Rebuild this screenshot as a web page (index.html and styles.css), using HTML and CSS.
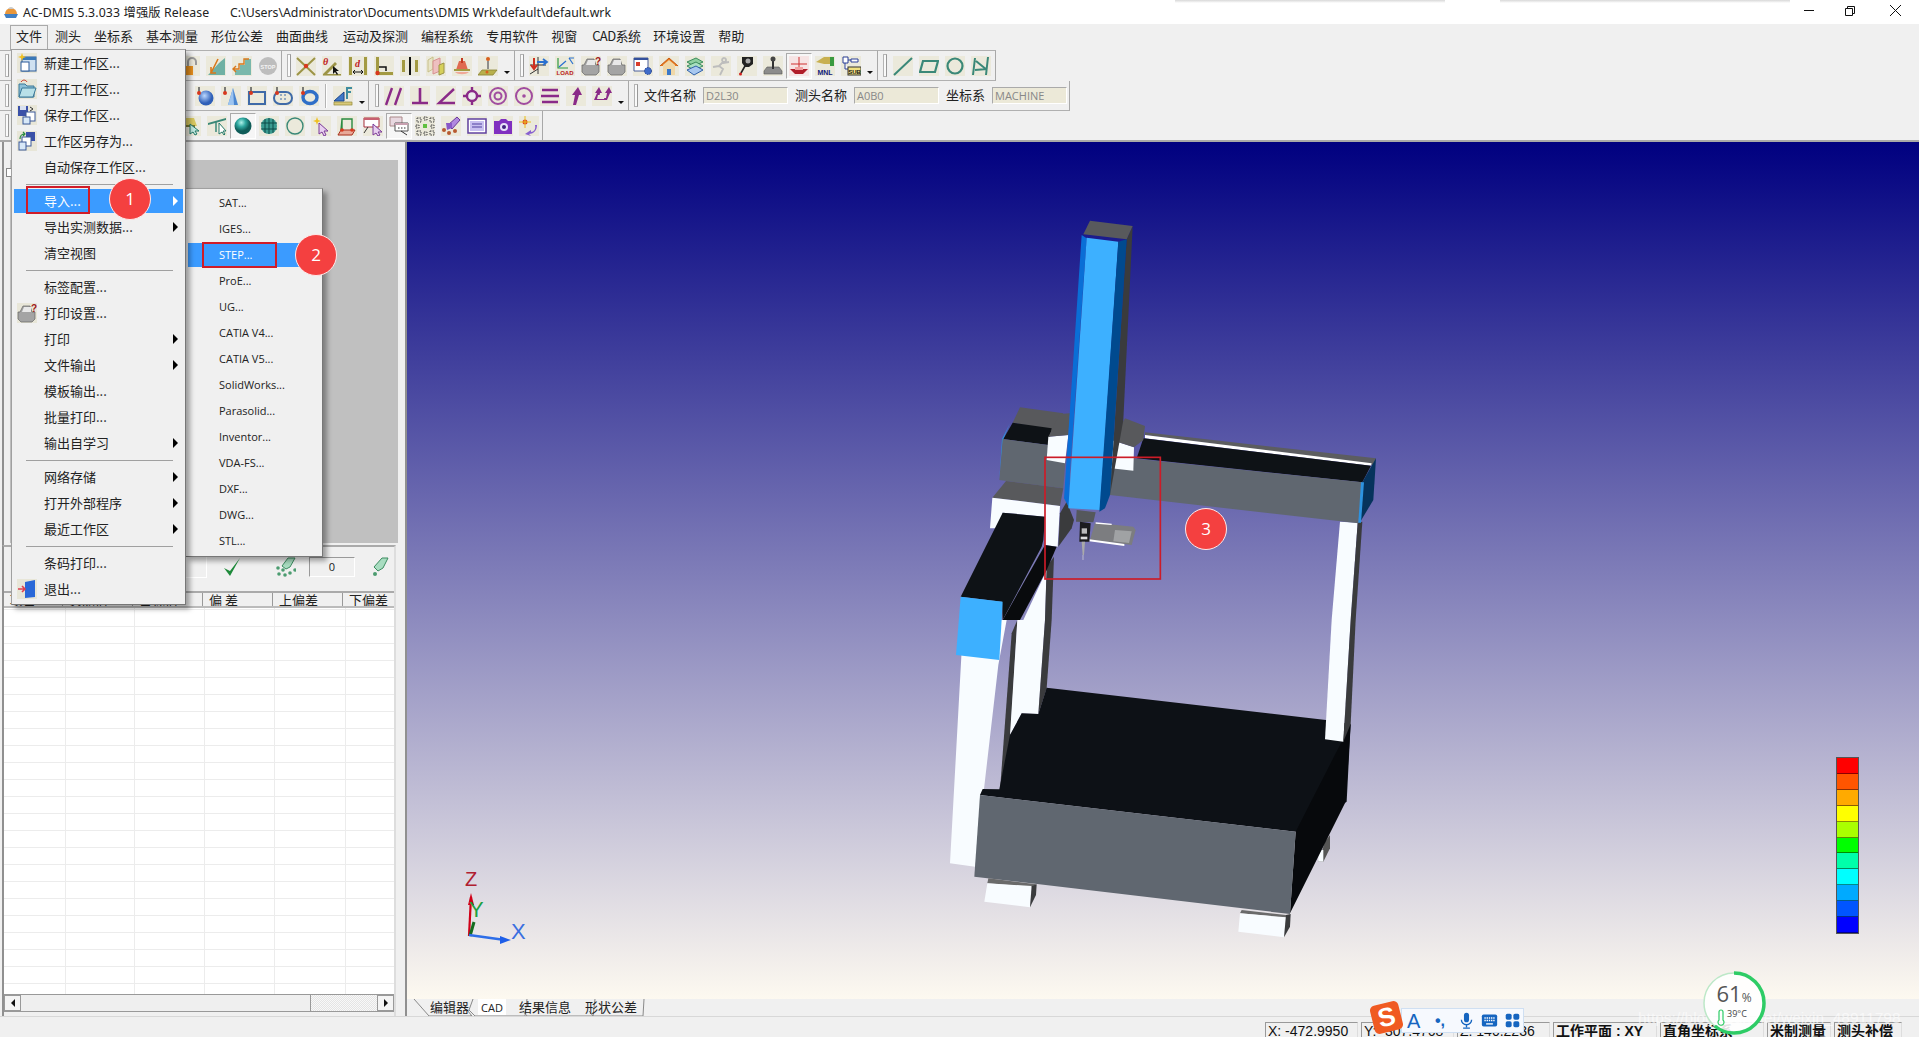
FILE: index.html
```html
<!DOCTYPE html>
<html lang="zh">
<head>
<meta charset="utf-8">
<title>AC-DMIS</title>
<link rel="stylesheet" href="styles.css">
</head>
<body>
<div class="app">
  <header class="title">
    <svg class="logo" viewBox="0 0 16 16"><path d="M2 10a6 6 0 0 1 12 0z" fill="#e8963a"/><path d="M5 5a3.5 4 0 0 1 6 0z" fill="#c9c9c9"/><path d="M1 10h14l-2 4H3z" fill="#3f7fc4"/></svg>
    <span class="t1">AC-DMIS 5.3.033 增强版 Release</span>
    <span class="t2">C:\Users\Administrator\Documents\DMIS Wrk\default\default.wrk</span>
    <div class="winbtns">
      <svg viewBox="0 0 103 24" class="winsvg"><path d="M0 10.5H10" stroke="#111"/><path d="M41.5 8.5h7v7h-7zM43.5 8.5v-2h7v7h-2" fill="none" stroke="#111"/><path d="M86 5l11 11M97 5L86 16" stroke="#111"/></svg>
    </div>
  </header>
  <nav class="menubar">
    <span class="mi active">文件</span><span class="mi">测头</span><span class="mi">坐标系</span><span class="mi">基本测量</span><span class="mi">形位公差</span><span class="mi">曲面曲线</span><span class="mi wide">运动及探测</span><span class="mi">编程系统</span><span class="mi">专用软件</span><span class="mi">视窗</span><span class="mi cad">CAD系统</span><span class="mi">环境设置</span><span class="mi">帮助</span>
  </nav>

  <section class="toolbars">
    <div class="row row1">
      <div class="tbar lead l1"><i class="grip g0"></i>
        <span class="tb"><svg class="ic" viewBox="0 0 20 20"><path d="M8 10V6a4 4 0 0 1 8 0v3" fill="none" stroke="#999" stroke-width="2"/><rect x="2" y="10" width="11" height="9" fill="#e8901c"/></svg></span>
        <span class="tb"><svg class="ic" viewBox="0 0 20 20"><path d="M2 19h17V2C13 6 8 13 2 19z" fill="#6fb0a4"/><path d="M12 3L5 17M5 11v6h5" fill="none" stroke="#d9781c" stroke-width="1.6"/></svg></span>
        <span class="tb"><svg class="ic" viewBox="0 0 20 20"><path d="M3 19v-5h5V9h5V3h6v16z" fill="#7ab8ac"/><path d="M1 13h6V8h5V3h5M4 10l-3 3 3 3" fill="none" stroke="#d9781c" stroke-width="1.4"/></svg></span>
        <span class="tb"><svg class="ic plain" viewBox="0 0 20 20"><circle cx="10" cy="10" r="9" fill="#bdbdbd"/><text x="10" y="12.5" class="stop">STOP</text></svg></span>
      </div>
      <div class="tbar"><i class="grip"></i>
        <span class="tb"><svg class="ic" viewBox="0 0 20 20"><path d="M1 2l18 17M19 2L1 19" stroke="#9c9446" stroke-width="2"/><circle cx="10" cy="10" r="2.2" fill="#d8381e"/></svg></span>
        <span class="tb"><svg class="ic" viewBox="0 0 20 20"><path d="M1 18h18v1.500H1zM1 18L13 6l2 2L5 18z" fill="#9c9446"/><text x="1" y="9" class="it red">θ</text><path d="M11 10v8l2-2 2 3 1-1-2-3h3z" fill="#111"/></svg></span>
        <span class="tb"><svg class="ic" viewBox="0 0 20 20"><path d="M1 1h3v18H1zM16 1h3v18h-3z" fill="#a39a42"/><text x="7" y="11" class="it red">d</text><path d="M5 16h10M5 16l2-2M5 16l2 2M15 16l-2-2M15 16l-2 2" stroke="#111" fill="none"/></svg></span>
        <span class="tb"><svg class="ic" viewBox="0 0 20 20"><path d="M2 1h3v15h14v3H2z" fill="#a39a42"/><path d="M5 11h7v4" fill="none" stroke="#111" stroke-width="1.500"/><circle cx="3.500" cy="17" r="2.200" fill="#d8381e"/></svg></span>
        <span class="tb"><svg class="ic" viewBox="0 0 20 20"><path d="M2 4h3v12H2zM15 4h3v12h-3z" fill="#a39a42"/><path d="M9 1h2v18H9z" fill="#111"/></svg></span>
        <span class="tb"><svg class="ic" viewBox="0 0 20 20"><path d="M2 4l5-3v12l-5 3z" fill="#e8e4c8" stroke="#c8c08a"/><path d="M7 5l7-3v13l-7 3z" fill="#eec0c0" stroke="#d89090"/><path d="M13 9l5-2v10l-5 2z" fill="#d6d05c" stroke="#9c9446"/></svg></span>
        <span class="tb"><svg class="ic" viewBox="0 0 20 20"><path d="M7 5h6l3 9H4z" fill="#e06a50"/><path d="M9 2h2v5H9z" fill="#c23a22"/><path d="M2 13h16v2H2z" fill="#a39a42"/><path d="M3 16c3 3 11 3 14 0z" fill="#f0a898"/></svg></span>
        <span class="tb"><svg class="ic" viewBox="0 0 20 20"><path d="M4 14h15l-4 5H0z" fill="#b8b04c" stroke="#8c8436" stroke-width=".8"/><path d="M10 5v8" stroke="#777" stroke-width="1.600"/><circle cx="10" cy="3" r="2" fill="#d8601e"/><circle cx="9" cy="16" r="1.500" fill="#d8601e"/></svg></span>
        <i class="dd"></i>
      </div>
      <div class="tbar"><i class="grip g3"></i>
        <span class="tb"><svg class="ic" viewBox="0 0 20 20"><path d="M1 9h16M9 1v17M1 18l8-5" fill="none" stroke="#333"/><path d="M5 2v10M2 9l3 4 3-4" fill="none" stroke="#d03020" stroke-width="2"/><path d="M8 6h9M14 3l4 3-4 3" fill="none" stroke="#2a70d0" stroke-width="1.800"/></svg></span>
        <span class="tb"><svg class="ic" viewBox="0 0 20 20"><path d="M3 2v10h10" fill="none" stroke="#2f9a40" stroke-width="1.200"/><path d="M4 11l7-6M14 2h5M14 2l4 6" stroke="#2a70d0" fill="none" stroke-width="1.200"/><text x="10" y="19" class="mini redb">LOAD</text></svg></span>
        <span class="tb"><svg class="ic" viewBox="0 0 20 20"><path d="M3 9l3-6h7l2 6h3v7l-3 3H4l-3-3V9z" fill="#a4a4a4" stroke="#666" stroke-width=".7"/><path d="M5 9h9V4H7z" fill="#e8e8e8"/><text x="14" y="9" class="q">?</text></svg></span>
        <span class="tb"><svg class="ic" viewBox="0 0 20 20"><path d="M3 9l3-6h7l2 6h3v7l-3 3H4l-3-3V9z" fill="#a4a4a4" stroke="#666" stroke-width=".7"/><path d="M5 9h9V4H7z" fill="#e8e8e8"/></svg></span>
        <span class="tb"><svg class="ic" viewBox="0 0 20 20"><path d="M1 2h14v13H1z" fill="#fff" stroke="#4a5e9a"/><path d="M1 2h14v2H1z" fill="#34509c"/><path d="M3 6h4v4H3z" fill="#d83c2c"/><circle cx="15" cy="15" r="3.500" fill="#3f6bc8" stroke="#25408a" stroke-dasharray="1.500 1"/></svg></span>
        <span class="tb"><svg class="ic" viewBox="0 0 20 20"><path d="M1 10l9-8 9 8" fill="#e87a1e" stroke="#c85a10"/><path d="M4 9v10h12V9l-6-5z" fill="#f0d8a8"/><path d="M8 13h4v6H8z" fill="#3a78c8"/></svg></span>
        <span class="tb"><svg class="ic" viewBox="0 0 20 20"><path d="M2 6l9-4 7 4-9 4z" fill="#8fd0a0" stroke="#3c8c5c"/><path d="M2 10l9-4 7 4-9 4z" fill="#a8e0c0" stroke="#3c8c5c"/><path d="M2 14l9-4 7 4-9 5z" fill="#a8c8f0" stroke="#3060a8"/></svg></span>
        <span class="tb"><svg class="ic" viewBox="0 0 20 20"><path d="M13 2a2 2 0 1 0 .1 0M12 6L8 10l4 3-3 6M8 10l-6 1M12 7l6-1" fill="none" stroke="#bdbdbd" stroke-width="1.800"/></svg></span>
        <span class="tb"><svg class="ic" viewBox="0 0 20 20"><path d="M5 1h11v7l-4 3H8L5 7z" fill="#222"/><circle cx="11" cy="5" r="2.500" fill="#aaa"/><path d="M8 10L4 17" stroke="#222" stroke-width="1.600"/><circle cx="3.500" cy="18" r="1.500" fill="#d02020"/></svg></span>
        <span class="tb"><svg class="ic" viewBox="0 0 20 20"><path d="M1 15l3-4h12l3 4v3H1z" fill="#8c8c8c" stroke="#555" stroke-width=".6"/><path d="M10 4v9" stroke="#333" stroke-width="2"/><circle cx="10" cy="3" r="2.500" fill="#444"/></svg></span>
        <span class="tb on"><svg class="ic tint" viewBox="0 0 20 20"><path d="M10 1v12M2 8h16" stroke="#d03030"/><path d="M1 13h18l-5 5H6z" fill="#b01c28"/><path d="M6 11h8v3H6z" fill="#f0a0a0"/></svg></span>
        <span class="tb"><svg class="ic" viewBox="0 0 20 20"><path d="M1 6l8-5h8v7h-8z" fill="#c8b050"/><path d="M15 1h4v9h-4z" fill="#3a9a40"/><text x="10" y="19" class="mini navy">MNL</text></svg></span>
        <span class="tb"><svg class="ic" viewBox="0 0 20 20"><path d="M2 1h5v6H2zM10 3h7v3h-7zM7 4h3M4 7v6h3" fill="#fff" stroke="#2a3f98"/><rect x="7" y="11" width="13" height="8" fill="#f0e080" stroke="#333"/><text x="13.500" y="17.500" class="mini blk">SUB</text></svg></span>
        <i class="dd"></i>
      </div>
      <div class="tbar"><i class="grip g4"></i>
        <span class="tb"><svg class="ic" viewBox="0 0 20 20"><path d="M1 19L19 2" stroke="#3a8878" stroke-width="2"/></svg></span>
        <span class="tb"><svg class="ic" viewBox="0 0 20 20"><path d="M4 5h15l-3 11H1z" fill="none" stroke="#3a8878" stroke-width="2.200"/></svg></span>
        <span class="tb"><svg class="ic" viewBox="0 0 20 20"><circle cx="10" cy="10" r="7.500" fill="none" stroke="#3a8878" stroke-width="2.200"/></svg></span>
        <span class="tb"><svg class="ic" viewBox="0 0 20 20"><path d="M4 2L2 19M17 1l-2 18M5 5l11 9M4 14l12-1" fill="none" stroke="#3a8878" stroke-width="2"/></svg></span>
      </div>
    </div>

    <div class="row row2">
      <div class="tbar lead l2"><i class="grip g0"></i>
        <span class="tb"><svg class="ic" viewBox="0 0 20 20"><defs><radialGradient id="bb" cx=".4" cy=".35"><stop offset="0" stop-color="#bcd8ff"/><stop offset="1" stop-color="#2f5fb8"/></radialGradient></defs><circle cx="11" cy="12" r="7.500" fill="url(#bb)"/><path d="M4 1v5" stroke="#555" stroke-width="1.500"/><circle cx="4" cy="7" r="2" fill="#d8381e"/></svg></span>
        <span class="tb"><svg class="ic" viewBox="0 0 20 20"><path d="M12 2l5 17H7z" fill="#4a86d0"/><path d="M12 2l1 17H7z" fill="#9cc4f0"/><path d="M4 1v5" stroke="#555" stroke-width="1.500"/><circle cx="4" cy="7" r="2" fill="#d8381e"/></svg></span>
        <span class="tb"><svg class="ic" viewBox="0 0 20 20"><rect x="2" y="6" width="16" height="12" fill="none" stroke="#3f6aa8" stroke-width="2"/><path d="M4 1v5" stroke="#555" stroke-width="1.500"/><circle cx="4" cy="7" r="2" fill="#d8381e"/></svg></span>
        <span class="tb"><svg class="ic" viewBox="0 0 20 20"><rect x="1" y="6" width="18" height="12" rx="6" fill="none" stroke="#3f6aa8" stroke-width="2"/><path d="M8 8v8M12 8v8" stroke="#3f6aa8" stroke-dasharray="2"/><path d="M4 1v5" stroke="#555" stroke-width="1.500"/><circle cx="4" cy="7" r="2" fill="#d8381e"/></svg></span>
        <span class="tb"><svg class="ic" viewBox="0 0 20 20"><ellipse cx="11" cy="11.500" rx="7" ry="6" fill="none" stroke="#2f6fc8" stroke-width="3.400"/><path d="M4 1v5" stroke="#555" stroke-width="1.500"/><circle cx="4" cy="7" r="2" fill="#d8381e"/></svg></span>
        <i class="vsep"></i>
        <span class="tb"><svg class="ic" viewBox="0 0 20 20"><path d="M1 15L11 6v9z" fill="#3f78c8" stroke="#1c4488"/><path d="M1 16h18v3H1z" fill="#d8c878" stroke="#8c8436" stroke-width=".6"/><path d="M13 1h6v2h-4v2h3v2h-3v6h-2z" fill="#3f8ca0"/></svg></span>
        <i class="dd"></i>
      </div>
      <div class="tbar"><i class="grip g5"></i>
        <span class="tb"><svg class="ic" viewBox="0 0 20 20"><path d="M8 2L2 19M17 2l-6 17" stroke="#8a2a88" stroke-width="2.400"/></svg></span>
        <span class="tb"><svg class="ic" viewBox="0 0 20 20"><path d="M10 2v14M2 17h16" stroke="#8a2a88" stroke-width="2.600"/></svg></span>
        <span class="tb"><svg class="ic" viewBox="0 0 20 20"><path d="M18 3L3 17h16" fill="none" stroke="#8a2a88" stroke-width="2.400"/></svg></span>
        <span class="tb"><svg class="ic" viewBox="0 0 20 20"><path d="M10 1v18M1 10h18" stroke="#8a2a88" stroke-width="2.400"/><circle cx="10" cy="10" r="5" fill="#eee" stroke="#8a2a88" stroke-width="2.400"/></svg></span>
        <span class="tb"><svg class="ic" viewBox="0 0 20 20"><circle cx="10" cy="10" r="8" fill="none" stroke="#a04ca0" stroke-width="2"/><circle cx="10" cy="10" r="3.500" fill="none" stroke="#a04ca0" stroke-width="2"/></svg></span>
        <span class="tb"><svg class="ic" viewBox="0 0 20 20"><circle cx="10" cy="10" r="8" fill="none" stroke="#a04ca0" stroke-width="2"/><circle cx="10" cy="10" r="1.800" fill="#a04ca0"/></svg></span>
        <span class="tb"><svg class="ic" viewBox="0 0 20 20"><path d="M2 4h16M1 10h18M2 16h16" stroke="#8a2a88" stroke-width="2.600"/></svg></span>
        <span class="tb"><svg class="ic" viewBox="0 0 20 20"><path d="M12 1l4 8h-3l-3 10H7l2-10H6z" fill="#8a2a88"/></svg></span>
        <span class="tb"><svg class="ic" viewBox="0 0 20 20"><path d="M7 1l3 6H8l-1 5h7l1-5h-2l4-6 3 6h-2l-3 7H2L5 7H3z" fill="#8a2a88"/><path d="M6 9h7l-1 4H5z" fill="#ebe9db"/></svg></span>
        <i class="dd"></i>
      </div>
      <div class="tbar fields"><i class="grip g6"></i>
        <span class="lbl">文件名称</span><span class="field">D2L30</span>
        <span class="lbl">测头名称</span><span class="field">A0B0</span>
        <span class="lbl">坐标系</span><span class="field">MACHINE</span>
      </div>
    </div>

    <div class="row row3">
      <div class="tbar lead l3 last"><i class="grip g0"></i>
        <span class="tb"><svg class="ic" viewBox="0 0 20 20"><path d="M1 2h12l3 8H1z" fill="#d8c860"/><path d="M1 10h13" stroke="#7a7a30" stroke-width="2"/><path d="M9 8v10l3-2 2 3 2-1-2-3h4z" fill="#bfe8e0" stroke="#247868"/></svg></span>
        <span class="tb"><svg class="ic" viewBox="0 0 20 20"><path d="M1 7L19 2v2L1 9z" fill="#3a8878"/><path d="M9 6v10" stroke="#3a8878" stroke-width="1.500"/><path d="M12 7v11l3-2 2 3 1-1-2-3h3z" fill="#fff" stroke="#247868"/></svg></span>
        <span class="tb on"><svg class="ic plain" viewBox="0 0 20 20"><defs><radialGradient id="tb" cx=".4" cy=".3"><stop offset="0" stop-color="#b0f0e8"/><stop offset=".5" stop-color="#2fa8a0"/><stop offset="1" stop-color="#0f5c58"/></radialGradient></defs><circle cx="10" cy="10" r="8.500" fill="url(#tb)"/></svg></span>
        <span class="tb"><svg class="ic" viewBox="0 0 20 20"><circle cx="10" cy="10" r="8" fill="#3a9a90"/><path d="M2 7h16M2 13h16M10 2v16M6 3v14M14 3v14" stroke="#0c4a48"/></svg></span>
        <span class="tb"><svg class="ic" viewBox="0 0 20 20"><circle cx="10" cy="10" r="8" fill="none" stroke="#3a8878" stroke-width="1.400"/></svg></span>
        <span class="tb"><svg class="ic" viewBox="0 0 20 20"><path d="M6 1l1 3 3 1-3 1-1 3-1-3-3-1 3-1z" fill="#f0c020"/><path d="M8 7v11l3-2 2 4 2-1-2-4h4z" fill="#e8d0f0" stroke="#7a3a98"/></svg></span>
        <span class="tb"><svg class="ic" viewBox="0 0 20 20"><path d="M4 14h14l-3 5H1z" fill="#e8a898" stroke="#a83020"/><path d="M5 14V3h10v11M5 3l-1 11" fill="none" stroke="#2a8a40" stroke-width="1.400"/><circle cx="5" cy="14" r="1.800" fill="#d8381e"/><circle cx="15" cy="14" r="1.800" fill="#d8381e"/></svg></span>
        <span class="tb"><svg class="ic" viewBox="0 0 20 20"><path d="M1 2h15v9H1z" fill="#fff" stroke="#a83040"/><path d="M1 2h15v2H1z" fill="#c86070"/><path d="M5 11L1 17" stroke="#333"/><path d="M10 8v11l3-2 2 3 2-1-2-3h4z" fill="#e8d0f0" stroke="#7a3a98"/></svg></span>
        <span class="tb on"><svg class="ic plain" viewBox="0 0 20 20"><path d="M1 1h12v9H1z" fill="#e8d8e0" stroke="#a88"/><path d="M6 7h13v8H6z" fill="#fff" stroke="#555"/><path d="M6 7h13v2H6z" fill="#c8a0b0"/><path d="M9 12h8" stroke="#333" stroke-dasharray="1.500"/><path d="M12 15l6 4" stroke="#333"/></svg></span>
        <span class="tb"><svg class="ic" viewBox="0 0 20 20"><path d="M2 2h4v4H2zM9 1h3v3H9zM15 2h4v4h-4zM1 9h3v3H1zM16 9h3v3h-3zM2 15h4v4H2zM9 16h3v3H9zM15 15h4v4h-4z" fill="none" stroke="#444" stroke-dasharray="1.500 1"/><rect x="8" y="8" width="4" height="4" fill="#60c040"/></svg></span>
        <span class="tb"><svg class="ic" viewBox="0 0 20 20"><path d="M7 9l9-8 3 3-8 9z" fill="#b088e0" stroke="#6a3a98"/><path d="M5 7h6v5l-5 2z" fill="#8858c8"/><circle cx="3" cy="14" r="2" fill="#b85a30"/><circle cx="8" cy="17" r="2" fill="#b85a30"/><circle cx="14" cy="15" r="2" fill="#b85a30"/></svg></span>
        <span class="tb"><svg class="ic" viewBox="0 0 20 20"><rect x="1" y="3" width="18" height="14" fill="#fff" stroke="#6040a0" stroke-width="1.500"/><rect x="3" y="5" width="14" height="10" fill="#c8c0f0"/><path d="M5 8h10M5 11h10" stroke="#5040a0"/></svg></span>
        <span class="tb"><svg class="ic" viewBox="0 0 20 20"><path d="M1 5h5l2-2h5l2 2h4v13H1z" fill="#8030c0"/><circle cx="11" cy="11" r="4" fill="#e8e0f8"/><circle cx="11" cy="11" r="2" fill="#402080"/></svg></span>
        <span class="tb"><svg class="ic" viewBox="0 0 20 20"><circle cx="6" cy="6" r="2.500" fill="#e04020"/><path d="M6 0v12M0 6h12" stroke="#e8c020"/><path d="M18 9c0 6-4 9-8 9l2 2-6-2 6-4v2c3 0 5-3 4-7z" fill="#8860d0"/></svg></span>
      </div>
    </div>
  </section>

  <main class="main">
    <aside class="left">
      <div class="tree"><i class="expander"></i><div class="treebody"></div></div>
      <div class="results">
        <div class="rtools">
          <span class="rinput"></span>
          <svg class="rcheck" viewBox="0 0 20 20"><path d="M2 11l6 8L18 1 8 14z" fill="#1e8a3a"/></svg>
          <svg class="rerase" viewBox="0 0 20 20"><path d="M6 9l6-8h7l-5 9-4 2z" fill="#a8dcc0" stroke="#3c8c60"/><circle cx="2" cy="11" r="1.800" fill="#4c9c70"/><circle cx="7" cy="13" r="1.800" fill="#4c9c70"/><circle cx="3" cy="17" r="1.800" fill="#4c9c70"/><circle cx="9" cy="18" r="1.800" fill="#4c9c70"/><circle cx="14" cy="16" r="1.800" fill="#4c9c70"/><circle cx="19" cy="13" r="1.800" fill="#4c9c70"/></svg>
          <span class="rcount">0</span>
          <svg class="rerase2" viewBox="0 0 20 20"><path d="M4 10l8-9h6l-5 10-5 3z" fill="#a8dcc0" stroke="#3c8c60"/><circle cx="5" cy="17" r="2" fill="#4c9c70"/></svg>
        </div>
        <div class="thead"><span class="th c1">项目</span><span class="th c2">实测值</span><span class="th c3">目标值</span><span class="th c4">偏 差</span><span class="th c4">上偏差</span><span class="th c5">下偏差</span></div>
        <div class="grid"></div>
        <div class="hscroll"><span class="sb"><i class="al"></i></span><span class="thumb"></span><span class="track"></span><span class="sb"><i class="ar"></i></span></div>
      </div>
    </aside>
    <section class="viewarea">
      <div class="view">
        <svg class="scene" viewBox="405 142 1514 857">
          <g transform="translate(930 620) scale(.33333)">
            <path d="M100 0h130l-25 135-70 605-75-10z" fill="#f8fcff"/>
            <path d="M245 40l17-40-28 470-24 40z" fill="#3a3b3d"/>
            <path d="M262 0h83l-20 282-50-2-35 65z" fill="#f8fcff"/>
            <path d="M345 0h20l-15 205-25 77z" fill="#3a3b3d"/>
            <path d="M1200 645v40l-20 40h-15l20-60z" fill="#555"/>
            <path d="M1165 690l15 0v35h-15z" fill="#f8fcff"/>
            <path d="M350 203L1188 300l74 12-12 233-153 90L150 525l8-18 50 1 32-163 35-65 50 2z" fill="#0d1116"/>
            <path d="M1097 635L1235 365l27-53-15 233-167 335z" fill="#07090c"/>
            <path d="M1205 0h57l-22 365-55-7z" fill="#f8fcff"/>
            <path d="M1262 0h15l-15 312-22 53z" fill="#3a3b3d"/>
            <path d="M150 525l947 110-17 247L133 770z" fill="#606770"/>
            <path d="M175 775l145 18-15 7-133-10z" fill="#6a6a6a"/>
            <path d="M172 790l133 8-5 64-137-17z" fill="#f8fcff"/>
            <path d="M305 798l15-5-2 32-18 37z" fill="#3a3b3d"/>
            <path d="M935 870l133 15v8l-138-13z" fill="#6a6a6a"/>
            <path d="M930 880l138 12-6 60-137-17z" fill="#f8fcff"/>
            <path d="M1068 885l14-3-2 38-18 32z" fill="#3a3b3d"/>
          </g>
          <g transform="translate(930 200) scale(.33333)">
            <path d="M1230 965l53 3-21 292h-57z" fill="#f8fcff"/>
            <path d="M1283 968l14-3-20 295h-15z" fill="#3a3b3d"/>
            <path d="M350 1110l-70 150h65z" fill="#f8fcff"/>
            <path d="M350 1100l22-30-7 190h-20z" fill="#3a3b3d"/>
            <path d="M645 697l693 78-8 20-685-90z" fill="#5c5d60"/>
            <path d="M645 705l680 85-2 7-678-82z" fill="#fff"/>
            <path d="M640 715l683 82-26 50-677-72z" fill="#0e1216"/>
            <path d="M540 768l757 79-12 123-745-85z" fill="#606770"/>
            <path d="M1297 847l41-72-8 125-42 70z" fill="#06335c"/>
            <path d="M1293 847h9l-9 121h-8z" fill="#2d93e0"/>
            <path d="M270 622l130 18-45 70v-20l-107-22z" fill="#58595c"/>
            <path d="M248 668l117 17-10 50-135-18z" fill="#0e1216"/>
            <path d="M240 670l-20 47-12 123 8-123z" fill="#2d93e0"/>
            <path d="M218 717l137 18 55 0-10 130-192-25z" fill="#606770"/>
            <path d="M355 710l60-5-10 85-55-10z" fill="#f8fcff"/>
            <path d="M390 642l30-2-5 65-60 5z" fill="#58595c"/>
            <path d="M545 720l67 22-2 70-67-7z" fill="#f8fcff"/>
            <path d="M585 655l60 23-5 42-28 22-67-22z" fill="#58595c"/>
            <path d="M228 843l172 22-10 53-203-25z" fill="#58595c"/>
            <path d="M187 893l203 25-7 122-38-5v-85l-127-12-3 47h-35z" fill="#f8fcff"/>
            <path d="M410 905l22 55-7 25-40 55 5-100z" fill="#3a3b3d"/>
            <path d="M218 938l127 12-5 70-5 20-117 220-2-55-124-15z" fill="#0e1216"/>
            <path d="M345 1035l35 5-30 70-80 150h-52z" fill="#090b0d"/>
            <path d="M92 1190l126 15-10 175-130-15z" fill="#3db0ff"/>
            <path d="M590 118l18-40-28 582-40 225z" fill="#3a3b3d"/>
            <path d="M480 62l128 16-18 40-130-15z" fill="#58595c"/>
            <path d="M455 105l15 10-50 700-2 110-16-30z" fill="#0a6ed6"/>
            <path d="M470 113l95 12-55 805-95-5z" fill="#3db0ff"/>
            <path d="M565 125l25-7-50 767-15 40-17 10z" fill="#004a8f"/>
            <path d="M440 930l57 7-7 30-52-2z" fill="#55585c"/>
            <path d="M495 968l115 12 7 10-12 45-125-15z" fill="#7c7d80"/>
            <path d="M497 967l48 4v4l-48-4zM478 1018l105 14v6l-105-14z" fill="#fff"/>
            <path d="M555 990l50 4-8 35-47-5z" fill="#a0a2a4"/>
            <path d="M450 965l32 5-4 55h-30z" fill="#1c1c1e"/>
            <rect x="455" y="985" width="16" height="16" fill="#bbb"/>
            <rect x="452" y="1010" width="20" height="8" fill="#ddd"/>
            <path d="M455 1025h10l-3 40h-4z" fill="#aaa"/>
            <path d="M459 1065v15" stroke="#ddd" stroke-width="2"/>
            <rect x="345" y="772" width="346" height="365" fill="none" stroke="#cc1c28" stroke-width="5"/>
          </g>
          <path d="M469 936l2-39" stroke="#d00018" stroke-width="2.200"/>
          <path d="M471 893l-3 12h6z" fill="#d00018"/>
          <path d="M470 936l4-14" stroke="#146c20" stroke-width="3"/>
          <path d="M469 935l36 5" stroke="#2e6ee8" stroke-width="2.400"/>
          <path d="M511 940l-11-4v8z" fill="#1e5ee8"/>
          <text x="465" y="886" class="axis az">Z</text>
          <text x="469" y="917" class="axis ay">Y</text>
          <text x="511" y="939" class="axis ax">X</text>
        </svg>
        <div class="legend"><i class="s1"></i><i class="s2"></i><i class="s3"></i><i class="s4"></i><i class="s5"></i><i class="s6"></i><i class="s7"></i><i class="s8"></i><i class="s9"></i><i class="s10"></i><i class="s11"></i></div>
      </div>
      <div class="tabs">
        <svg class="tabline" viewBox="0 0 240 17"><path d="M5 0l15 17h43l-5-6M63 17h-2M60 11l6 6h50l2-17M118 17l-4-5M118 17h66l2-17M184 17l-4-5M184 17h50l1-17" fill="none" stroke="#888"/><path d="M60 11l4-11" fill="none" stroke="#888"/></svg>
        <span class="tab t-a">编辑器</span><span class="tab t-b">CAD</span><span class="tab t-c">结果信息</span><span class="tab t-d">形状公差</span>
      </div>
    </section>
  </main>

  <footer class="status">
    <span class="cell w93">X: -472.9950</span><span class="cell w93">Y: -307.4768</span><span class="cell w93">Z: 140.2236</span><span class="cell w104 bold">工作平面 : XY</span><span class="cell w104 bold">直角坐标系</span><span class="cell w64 bold">米制测量</span><span class="cell w68 bold">测头补偿</span>
  </footer>

  <!-- overlays -->
  <div class="topshade a"></div><div class="topshade b"></div>

  <div class="popup filemenu">
    <div class="it2"><svg class="mic" viewBox="0 0 20 20"><rect x="5" y="4" width="14" height="14" fill="#cfe0f0" stroke="#2a5a9a"/><path d="M5 4h14v3H5z" fill="#3a78b8"/><rect x="4" y="9" width="8" height="9" fill="#fff" stroke="#2a5a9a"/><path d="M5 0l1 3 3 1-3 1-1 3-1-3-3-1 3-1z" fill="#f0c020"/></svg>新建工作区...</div>
    <div class="it2"><svg class="mic" viewBox="0 0 20 20"><path d="M2 5h6l2 2h7v11H2z" fill="#8ec0d8" stroke="#3a7898"/><path d="M5 9h14l-3 9H2z" fill="#b8e0e8" stroke="#3a7898"/><path d="M4 3c2-3 5-2 6 0" fill="none" stroke="#c83020"/></svg>打开工作区...</div>
    <div class="it2"><svg class="mic" viewBox="0 0 20 20"><rect x="1" y="1" width="10" height="10" fill="#3a50a8"/><rect x="3" y="1" width="6" height="4" fill="#d8e0f0"/><rect x="9" y="7" width="9" height="9" fill="#fff" stroke="#3a5898"/><rect x="6" y="12" width="7" height="7" fill="#d8e8f8" stroke="#3a5898"/><path d="M13 2l3 2-3 2" fill="none" stroke="#333"/></svg>保存工作区...</div>
    <div class="it2"><svg class="mic" viewBox="0 0 20 20"><rect x="9" y="1" width="9" height="9" fill="#3a50a8"/><rect x="5" y="6" width="9" height="9" fill="#fff" stroke="#3a5898"/><rect x="2" y="11" width="7" height="8" fill="#d8e8f8" stroke="#3a5898"/><path d="M3 8c0-3 2-5 5-5M6 1l2 2-2 2" fill="none" stroke="#2a8a40" stroke-width="1.200"/></svg>工作区另存为...</div>
    <div class="it2 noic">自动保存工作区...</div>
    <hr class="msep">
    <div class="it2 sel arrow">导入...</div>
    <div class="it2 noic arrow">导出实测数据...</div>
    <div class="it2 noic">清空视图</div>
    <hr class="msep">
    <div class="it2 noic">标签配置...</div>
    <div class="it2"><svg class="mic" viewBox="0 0 20 20"><path d="M3 9l3-6h7l2 6h3v7l-3 3H4l-3-3V9z" fill="#a4a4a4" stroke="#666" stroke-width=".7"/><path d="M5 9h9V4H7z" fill="#e8e8e8"/><text x="14" y="9" class="q">?</text></svg>打印设置...</div>
    <div class="it2 noic arrow">打印</div>
    <div class="it2 noic arrow">文件输出</div>
    <div class="it2 noic">模板输出...</div>
    <div class="it2 noic">批量打印...</div>
    <div class="it2 noic arrow">输出自学习</div>
    <hr class="msep">
    <div class="it2 noic arrow">网络存储</div>
    <div class="it2 noic arrow">打开外部程序</div>
    <div class="it2 noic arrow">最近工作区</div>
    <hr class="msep">
    <div class="it2 noic">条码打印...</div>
    <div class="it2"><svg class="mic" viewBox="0 0 20 20"><path d="M8 3l10-2v17l-10 1z" fill="#2a68d8"/><path d="M1 10h6M5 7l3 3-3 3" fill="none" stroke="#e04050" stroke-width="1.600"/></svg>退出...</div>
  </div>

  <div class="popup submenu">
    <div class="sub">SAT...</div><div class="sub">IGES...</div><div class="sub sel">STEP...</div><div class="sub">ProE...</div><div class="sub">UG...</div><div class="sub">CATIA V4...</div><div class="sub">CATIA V5...</div><div class="sub">SolidWorks...</div><div class="sub">Parasolid...</div><div class="sub">Inventor...</div><div class="sub">VDA-FS...</div><div class="sub">DXF...</div><div class="sub">DWG...</div><div class="sub">STL...</div>
  </div>

  <div class="redbox r1"></div><div class="redbox r2"></div>
  <div class="callout n1">1</div><div class="callout n2">2</div><div class="callout n3">3</div>

  <div class="watermark">https://blog.csdn.net/weixin_48911798</div>

  <div class="ime">
    <span class="ime-s">S</span>
    <span class="ime-a">A</span>
    <span class="ime-p">•,</span>
    <svg class="ime-i" viewBox="0 0 20 20"><rect x="7" y="1" width="6" height="11" rx="3" fill="#1565c0"/><path d="M4 9a6 6 0 0 0 12 0M10 15v3M6 19h8" fill="none" stroke="#1565c0" stroke-width="1.600"/></svg>
    <svg class="ime-i" viewBox="0 0 20 20"><rect x="1" y="3" width="18" height="14" rx="2" fill="#1565c0"/><path d="M4 7h12M4 10h12" stroke="#fff" stroke-width="1.600" stroke-dasharray="1.600 1"/><path d="M6 14h8" stroke="#fff" stroke-width="1.600"/></svg>
    <svg class="ime-i" viewBox="0 0 20 20"><rect x="2" y="2" width="7" height="7" rx="2" fill="#1565c0"/><rect x="11" y="2" width="7" height="7" rx="2" fill="#1565c0"/><rect x="2" y="11" width="7" height="7" rx="2" fill="#1565c0"/><rect x="11" y="11" width="7" height="7" rx="2" fill="#1565c0"/></svg>
  </div>

  <div class="gauge">
    <svg class="gring" viewBox="0 0 68 68"><circle cx="34" cy="34" r="30" fill="#fff" fill-opacity=".88" stroke="#bde8c8" stroke-width="1.500"/><circle cx="34" cy="34" r="30" fill="none" stroke="#2ecc66" stroke-width="3.500" stroke-dasharray="115 188" transform="rotate(-90 34 34)"/><path d="M19 43v8a3 3 0 1 0 4 0v-8a2 2 0 0 0-4 0z" fill="none" stroke="#2ecc66" stroke-width="1.200"/></svg>
    <div class="gtext"><span class="gnum">61</span><span class="gpct">%</span></div>
    <div class="gtemp">39°C</div>
  </div>
</div>
</body>
</html>
```
FILE: styles.css
```css
* { box-sizing: border-box; }
html, body { margin: 0; padding: 0; }
body { font-family: "Noto Sans CJK SC", "Noto Sans", sans-serif; color: #222; background: #f0f0f0; }
.app { position: relative; width: 1919px; height: 1037px; overflow: hidden; display: flex; flex-direction: column; background: #f0f0f0; }

/* title */
.title { height: 24px; background: #fff; display: flex; align-items: center; font: 12.300px "Noto Sans", "Noto Sans CJK SC", sans-serif; padding-left: 3px; color: #222; flex: none; }
.logo { width: 16px; height: 16px; margin-right: 4px; }
.t1 { width: 207px; white-space: nowrap; letter-spacing: .12px; }
.t2 { white-space: nowrap; }
.winbtns { margin-left: auto; margin-right: 12px; height: 24px; }
.winsvg { width: 103px; height: 24px; display: block; overflow: visible; }
.topshade { position: absolute; top: 0; height: 3px; background: linear-gradient(#d8d8d8, #fff); }
.topshade.a { left: 1175px; width: 270px; }
.topshade.b { left: 1500px; width: 290px; }

/* menubar */
.menubar { height: 26px; display: flex; align-items: flex-start; gap: 13px; padding-left: 16px; font-size: 13px; flex: none; color: #222; }
.mi { position: relative; white-space: nowrap; line-height: 24px; height: 26px; }
.mi.wide { margin-left: 2px; }
.mi.cad { margin-left: 2px; letter-spacing: -.6px; }
.mi.active::before { content: ""; position: absolute; left: -6px; right: -6px; top: 1px; bottom: 0; border: 1px solid #aaa; border-bottom: 0; background: transparent; }

/* toolbars */
.toolbars { flex: none; height: 92px; }
.row { display: flex; align-items: stretch; }
.row1 { height: 31px; }
.row2 { height: 30px; }
.row3 { height: 31px; border-bottom: 2px solid #a8a8a8; }
.tbar { display: flex; align-items: center; border-bottom: 1px solid #b0b0b0; border-right: 1px solid #a8a8a8; padding-right: 1px; }
.row1 .tbar { border-top: 1px solid #b0b0b0; }
.row3 .tbar { border-bottom: 0; }
.lead { position: relative; padding-right: 0; }
.l1 { padding-left: 177px; width: 282px; }
.l2 { padding-left: 192px; width: 369px; }
.l3 { padding-left: 178px; width: 543px; }
.grip { width: 4px; height: 23px; margin: 0 2px 0 5px; border: 1px solid #b4b4b4; border-right-color: #999; background: #fafafa; flex: none; }
.grip.g0 { position: absolute; left: 0; top: 3px; }
.g3 { margin-right: 2px; }
.g4 { margin-right: 3px; }
.g5 { margin: 0 2px 0 6px; }
.g6 { margin: 0 6px 0 5px; }
.tb { width: 26px; height: 26px; display: flex; align-items: center; justify-content: center; flex: none; }
.tb.on { border: 1px solid #fff; border-left-color: #aaa; border-top-color: #aaa; background: #f6f6f6; }
.ic { width: 20px; height: 20px; background: #ebe9db; display: block; }
.ic.plain { background: transparent; }
.ic.tint { background: #f6e4e4; }
.dd { width: 12px; height: 20px; flex: none; position: relative; }
.dd::after { content: ""; position: absolute; left: 3px; bottom: 2px; border: 3px solid transparent; border-top: 3px solid #111; border-bottom: 0; }
.vsep { width: 2px; height: 24px; margin: 0 3px; background: #b4b4b4; border-right: 1px solid #fff; flex: none; }
.stop { font: 700 5.500px "Liberation Sans", sans-serif; fill: #f4f4f4; text-anchor: middle; }
.it { font: italic 700 10px "Liberation Serif", serif; }
.red { fill: #c02020; }
.mini { font: 700 6px "Liberation Sans", sans-serif; text-anchor: middle; }
.redb { fill: #b81818; }
.navy { fill: #101878; font-size: 7px; }
.blk { fill: #111; }
.q { font: 700 10px "Liberation Sans", sans-serif; fill: #a01818; }
.fields { padding-right: 2px; font-size: 13px; gap: 7px; width: 441px; }
.fields .grip { margin-right: -1px; }
.lbl { white-space: nowrap; color: #222; padding-bottom: 2px; }
.field { width: 85px; height: 17px; background: #ece9d8; border: 1px solid #aaa; border-right-color: #fff; border-bottom-color: #fff; color: #888; font: 11px/15px "Open Sans", sans-serif; padding-left: 2px; }
.fields .field:last-child { width: 75px; }

/* main */
.main { flex: none; height: 874px; display: flex; }
.left { width: 405px; flex: none; display: flex; flex-direction: column; padding-left: 2px; }
.tree { height: 403px; position: relative; padding: 18px 7px 2px 6px; border-left: 2px solid #909090; }
.treebody { height: 100%; background: #c0c0c0; }
.expander { position: absolute; left: 2px; top: 26px; width: 9px; height: 9px; border: 1px solid #888; background: #fff; }
.results { flex: 1; display: flex; flex-direction: column; border-left: 2px solid #909090; border-top: 2px solid #aaa; margin-right: 9px; padding-left: 0; border-right: 2px solid #ddd; }
.rtools { height: 44px; display: flex; align-items: center; flex: none; padding-bottom: 4px; }
.rinput { width: 60px; height: 22px; margin-left: 143px; border: 1px solid #bbb; border-right-color: #fff; border-bottom-color: #fff; }
.rcheck { width: 20px; height: 20px; margin-left: 15px; }
.rerase { width: 20px; height: 20px; margin-left: 34px; }
.rcount { width: 46px; height: 20px; margin-left: 13px; border: 1px solid #999; border-right-color: #fff; border-bottom-color: #fff; font: 11px/18px "Open Sans", sans-serif; text-align: center; }
.rerase2 { width: 20px; height: 20px; margin-left: 15px; }
.thead { height: 17px; display: flex; flex: none; margin-left: 0; border-top: 2px solid #aaa; border-bottom: 2px solid #bbb; font-size: 13px; overflow: hidden; }
.th { border-right: 1px solid #999; padding-left: 6px; line-height: 13px; white-space: nowrap; flex: none; }
.c1 { width: 59px; }
.c2, .c3, .c4 { width: 70px; }
.c5 { flex: 1; border-right: 0; }
.grid { flex: 1; background-color: #fff;
  background-image: linear-gradient(#ececec, #ececec), linear-gradient(#ececec, #ececec), linear-gradient(#ececec, #ececec), linear-gradient(#ececec, #ececec), linear-gradient(#ececec, #ececec), repeating-linear-gradient(#ececec 0 1px, transparent 1px 17px);
  background-size: 1px 100%, 1px 100%, 1px 100%, 1px 100%, 1px 100%, 100% 100%;
  background-position: 61px 0, 130px 0, 200px 0, 270px 0, 341px 0, 0 1px;
  background-repeat: no-repeat; }
.hscroll { height: 18px; display: flex; flex: none; background: #f0f0f0; border-top: 1px solid #999; border-bottom: 1px solid #999; margin-bottom: 4px; }
.sb { width: 17px; flex: none; border: 1px solid #999; display: flex; align-items: center; justify-content: center; background: #f4f4f4; }
.al { border: 4px solid transparent; border-right: 4px solid #111; border-left: 0; }
.ar { border: 4px solid transparent; border-left: 4px solid #111; border-right: 0; }
.thumb { width: 290px; border-right: 1px solid #999; background: #efefef; flex: none; }
.track { flex: 1; background: repeating-conic-gradient(#e4e4e4 0 25%, #f8f8f8 0 50%) 0 0 / 2px 2px; }

.viewarea { flex: 1; display: flex; flex-direction: column; border-left: 0; }
.view { position: relative; height: 857px; flex: none; background: linear-gradient(#000080, #fdf9f0); border-left: 2px solid #909090; border-top: 0; overflow: hidden; }
.scene { position: absolute; left: -2px; top: 0; width: 1514px; height: 857px; display: block; }
.axis { font: 400 22px "Liberation Sans", sans-serif; }
.az { fill: #b02030; font-size: 20px; }
.ay { fill: #20a040; }
.ax { fill: #3a6fe0; }
.legend { position: absolute; left: 1429px; top: 615px; width: 23px; height: 177px; display: flex; flex-direction: column; border: 1px solid #555; }
.legend i { flex: 1; border-bottom: 1px solid rgba(0,0,0,.45); }
.s1 { background: #f00; } .s2 { background: #f50; } .s3 { background: #fa0; } .s4 { background: #ff0; } .s5 { background: #af0; } .s6 { background: #0f0; } .s7 { background: #0fa; } .s8 { background: #0ff; } .s9 { background: #0af; } .s10 { background: #05f; } .s11 { background: #00f; }
.tabs { position: relative; height: 17px; display: flex; font-size: 13px; line-height: 15px; border-left: 2px solid #909090; background: #f0f0f0; }
.tabline { position: absolute; left: 2px; top: 0; width: 240px; height: 17px; }
.tab { position: relative; white-space: nowrap; }
.t-a { margin-left: 23px; }
.t-b { font: 11px/17px "Open Sans", sans-serif; background: #fff; padding: 0 3px; margin-left: 9px; height: 16px; }
.t-c { margin-left: 13px; }
.t-d { margin-left: 14px; }

/* status */
.status { flex: 1; display: flex; justify-content: flex-end; gap: 3px; padding: 5px 17px 0 0; border-top: 1px solid #d8d8d8; font: 14px/16px "Liberation Sans", "Noto Sans CJK SC", sans-serif; color: #111; overflow: hidden; }
.cell { border: 1px solid #999; border-right-color: #ddd; border-bottom: 0; padding-left: 2px; white-space: nowrap; overflow: hidden; height: 20px; font-weight: 500; }
.bold { font-weight: 700; }
.w93 { width: 93px; } .w104 { width: 104px; } .w64 { width: 64px; } .w68 { width: 68px; }

/* popups */
.popup { position: absolute; background: #f0f0f0; border: 1px solid #a0a0a0; border-right-color: #777; border-bottom-color: #777; box-shadow: 4px 4px 5px rgba(0,0,0,.35); }
.filemenu { left: 11px; top: 49px; width: 175px; height: 556px; font-size: 13px; z-index: 3; }
.it2 { position: relative; height: 26px; margin: 0 2px; border: solid transparent; border-width: 1px 0; background-clip: padding-box; display: flex; align-items: center; padding: 0 0 2px 30px; white-space: nowrap; color: #222; }
.mic { position: absolute; left: 3px; top: 2px; width: 20px; height: 20px; background: #e8e6d8; }
.arrow::after { content: ""; position: absolute; left: 159px; top: 7px; border: 5px solid transparent; border-left: 5px solid #000; border-right: 0; }
.it2.sel, .sub.sel { background-color: #3b9bff; color: #fff; }
.it2.sel.arrow::after { border-left-color: #fff; }
.msep { height: 1px; margin: 4px 12px 3px 14px; border: 0; background: #a0a0a0; }
.submenu { left: 185px; top: 188px; width: 138px; height: 369px; z-index: 2; padding-top: 1px; }
.sub { height: 26px; margin: 0 2px; border: solid transparent; border-width: 1px 0; background-clip: padding-box; padding-left: 31px; font: 11px/24px "Open Sans", sans-serif; color: #222; }

.redbox { position: absolute; border: 2px solid #d01c28; z-index: 4; }
.r1 { left: 26px; top: 186px; width: 64px; height: 28px; }
.r2 { left: 202px; top: 242px; width: 75px; height: 26px; }
.callout { position: absolute; width: 42px; height: 42px; border-radius: 50%; background: #f44040; border: 1px solid #ffe8e8; color: #fff; font: 17px/40px "Open Sans", sans-serif; text-align: center; z-index: 5; }
.n1 { left: 109px; top: 178px; }
.n2 { left: 295px; top: 234px; }
.n3 { left: 1185px; top: 508px; }

.watermark { position: absolute; left: 1638px; top: 1009px; font: 15.500px/18px "Liberation Sans", sans-serif; color: rgba(255,255,255,.6); z-index: 7; white-space: nowrap; }
.ime { position: absolute; left: 1372px; top: 1003px; width: 152px; height: 30px; z-index: 6; display: flex; align-items: center; padding: 5px 0 0 30px; }
.ime::before { content: ""; position: absolute; left: 29px; right: 0; top: 5px; bottom: 0; background: #f6f9fe; border: 1px solid #cfdff2; z-index: -1; }
.ime-s { position: absolute; left: 0; top: 0; width: 29px; height: 29px; background: #f05a22; border-radius: 5px; color: #fff; font: 700 26px/28px "Liberation Sans", sans-serif; text-align: center; transform: rotate(-14deg); }
.ime-a { color: #1565c0; font: 20px/22px "Liberation Sans", sans-serif; width: 18px; margin-left: 5px; }
.ime-p { color: #1565c0; font: 700 16px/18px "Liberation Sans", sans-serif; width: 24px; text-align: center; margin-left: 3px; }
.ime-i { width: 17px; height: 17px; margin-left: 6px; flex: none; }
.gauge { position: absolute; left: 1700px; top: 969px; width: 68px; height: 68px; z-index: 8; }
.gring { position: absolute; inset: 0; width: 68px; height: 68px; display: block; }
.gtext { position: absolute; left: 0; right: 0; top: 10px; text-align: center; color: #555; font: 22px/28px "Open Sans", sans-serif; }
.gpct { font-size: 12px; }
.gtemp { position: absolute; left: 27px; top: 39px; font: 9px/12px "Open Sans", sans-serif; color: #444; }
```
